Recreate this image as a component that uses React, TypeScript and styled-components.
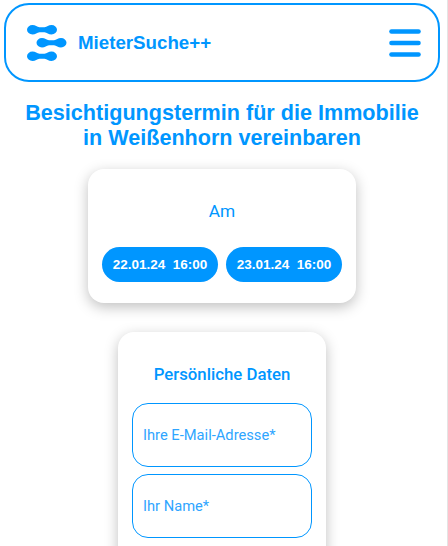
import React from "react";
import styled, { createGlobalStyle } from "styled-components";

const Global = createGlobalStyle`
  html, body {
    margin: 0;
    padding: 0;
    height: 546px;
    overflow: hidden;
    background: #fff;
    font-family: "Liberation Sans", Arial, sans-serif;
  }
`;

const Page = styled.div`
  width: 436px;
  height: 546px;
  border-right: 1px solid #e4e4e4;
  overflow: hidden;
  padding: 3px 7px 0 4px;
  box-sizing: content-box;
`;

const Header = styled.header`
  height: 79px;
  box-sizing: border-box;
  border: 2px solid #0096ff;
  border-radius: 25px;
  display: flex;
  align-items: center;
  justify-content: space-between;
  padding: 0 17px 0 21px;
`;

const Brand = styled.div`
  display: flex;
  align-items: center;
  gap: 11px;
`;

const BrandName = styled.span`
  color: #0096ff;
  font-size: 18.72px;
  font-weight: 700;
`;

const Title = styled.h1`
  margin: 18px 0 0;
  color: #0096ff;
  font-size: 21.6px;
  font-weight: 700;
  line-height: 25px;
  text-align: center;
`;

const Card = styled.section`
  background: #fff;
  border-radius: 16px;
  box-shadow: 0 4px 14px rgba(0, 0, 0, 0.25);
  box-sizing: border-box;
  padding: 14px;
  margin-left: auto;
  margin-right: auto;
`;

const DateCard = styled(Card)`
  width: 268px;
  height: 134px;
  margin-top: 19px;
`;

const DateLabel = styled.div`
  color: #0096ff;
  font-family: Roboto, sans-serif;
  font-size: 17.28px;
  font-weight: 400;
  text-align: center;
  margin-top: 18px;
  line-height: 20px;
`;

const Slots = styled.div`
  display: flex;
  gap: 8px;
  margin-top: 26px;
`;

const Slot = styled.button`
  width: 116px;
  height: 35px;
  padding: 0;
  border: none;
  border-radius: 18px;
  background: #0096ff;
  color: #fff;
  font-family: "Liberation Sans", Arial, sans-serif;
  font-size: 13.5px;
  font-weight: 700;
  white-space: pre;
`;

const FormCard = styled(Card)`
  width: 208px;
  height: 300px;
  margin-top: 29px;
`;

const FormTitle = styled.h2`
  margin: 19px 0 0;
  color: #0096ff;
  font-family: Roboto, sans-serif;
  font-size: 16.8px;
  font-weight: 500;
  line-height: 19px;
  text-align: center;
`;

const Fields = styled.div`
  display: flex;
  flex-direction: column;
  gap: 7px;
  margin-top: 19px;
`;

const Field = styled.input`
  width: 180px;
  height: 64px;
  box-sizing: border-box;
  border: 1px solid #0096ff;
  border-radius: 16px;
  padding: 0 10px;
  background: #fff;
  font-family: Roboto, sans-serif;
  font-size: 14.7px;
  outline: none;
  &::placeholder {
    color: #2ea5ff;
    opacity: 1;
  }
`;

const bar =
  "M5.500 0C8.500 0 10 2 12.500 2.300H17.500C20 2 21.500 0 24.500 0A5.500 4.750 0 0 1 24.500 9.500C21.500 9.500 20 7.500 17.500 7.200H12.500C10 7.500 8.500 9.500 5.500 9.500A5.500 4.750 0 0 1 5.500 0Z";

const Logo = () => (
  <svg width="40" height="36" viewBox="0 0 40 36" fill="#0096ff">
    <path d={bar} />
    <path d={bar} transform="translate(9.500 13)" />
    <path d={bar} transform="translate(0 26.500)" />
  </svg>
);

const Burger = () => (
  <svg width="32" height="28" viewBox="0 0 32 28" stroke="#0096ff" strokeWidth="4.600" strokeLinecap="round">
    <line x1="2.500" y1="2.500" x2="29.500" y2="2.500" />
    <line x1="2.500" y1="14" x2="29.500" y2="14" />
    <line x1="2.500" y1="25.500" x2="29.500" y2="25.500" />
  </svg>
);

export default function App() {
  return (
    <Page>
      <Global />
      <Header>
        <Brand>
          <Logo />
          <BrandName>MieterSuche++</BrandName>
        </Brand>
        <Burger />
      </Header>
      <Title>
        Besichtigungstermin für die Immobilie
        <br />
        in Weißenhorn vereinbaren
      </Title>
      <DateCard>
        <DateLabel>Am</DateLabel>
        <Slots>
          <Slot>{"22.01.24  16:00"}</Slot>
          <Slot>{"23.01.24  16:00"}</Slot>
        </Slots>
      </DateCard>
      <FormCard>
        <FormTitle>Persönliche Daten</FormTitle>
        <Fields>
          <Field placeholder="Ihre E-Mail-Adresse*" />
          <Field placeholder="Ihr Name*" />
        </Fields>
      </FormCard>
    </Page>
  );
}
